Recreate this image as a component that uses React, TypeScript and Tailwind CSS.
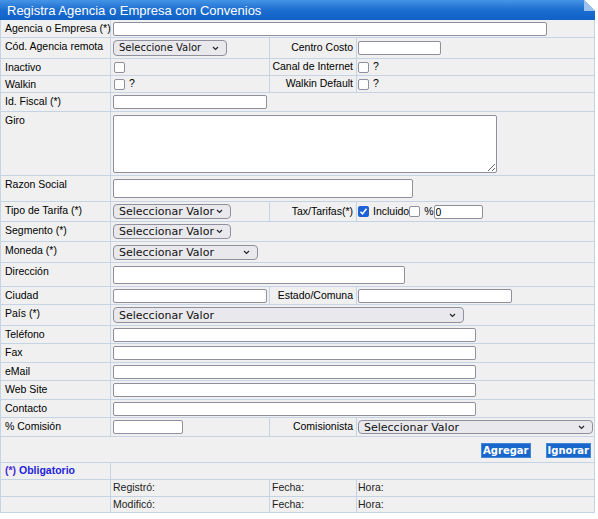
import React from "react"

const B = "border-[#c4d4e4]"

const Input = ({ className = "", value = "" }: { className?: string; value?: string }) => (
  <input
    type="text"
    readOnly
    defaultValue={value}
    className={`shrink-0 bg-white border border-[#8f8f9d] rounded-[2px] px-[1px] text-[10.5px] leading-none outline-none ${className}`}
  />
)

const Select = ({
  text,
  className = "",
  size = "text-[11px]",
}: {
  text: string
  className?: string
  size?: string
}) => (
  <div
    className={`shrink-0 flex items-center justify-between bg-[#e9e9ed] border border-[#8f8f9d] rounded-[4px] pl-[5px] pr-[7px] font-['DejaVu_Sans',sans-serif] leading-none text-[#111] ${size} ${className}`}
  >
    <span>{text}</span>
    <svg width="7" height="5" viewBox="0 0 7 5">
      <path d="M1 1l2.5 2.5L6 1" stroke="#222" strokeWidth="1.1" fill="none" />
    </svg>
  </div>
)

const Check = ({ checked = false }: { checked?: boolean }) =>
  checked ? (
    <span className="shrink-0 w-[11px] h-[11px] rounded-[2px] bg-[#1d62d6] flex items-center justify-center">
      <svg width="9" height="9" viewBox="0 0 9 9">
        <path d="M1.5 4.8l2 2 4-5" stroke="white" strokeWidth="1.5" fill="none" />
      </svg>
    </span>
  ) : (
    <span className="shrink-0 block w-[11px] h-[11px] rounded-[2px] bg-white border border-[#8f8f9d]" />
  )

const Row = ({ h, children }: { h: string; children: React.ReactNode }) => (
  <div className={`flex border-b ${B} ${h}`}>{children}</div>
)

const Label = ({ children }: { children?: React.ReactNode }) => (
  <div className={`w-[110px] shrink-0 border-r ${B} pl-[4px] pt-[2px] leading-[13px] whitespace-nowrap`}>
    {children}
  </div>
)

const Span = ({ children }: { children?: React.ReactNode }) => (
  <div className="flex-1 flex items-center pl-[2px]">{children}</div>
)

const C2 = ({ children }: { children?: React.ReactNode }) => (
  <div className={`w-[159px] shrink-0 border-r ${B} flex items-center pl-[2px]`}>{children}</div>
)

const C3 = ({ children }: { children?: React.ReactNode }) => (
  <div className={`w-[87px] shrink-0 border-r ${B} flex items-center justify-end pr-[3px] whitespace-nowrap`}>
    {children}
  </div>
)

const C4 = ({ children }: { children?: React.ReactNode }) => (
  <div className="flex-1 flex items-center pl-[1px]">{children}</div>
)

export default function App() {
  return (
    <div className="w-[598px] h-[519px] bg-white font-['Liberation_Sans',Arial,sans-serif] text-[10.5px] text-black">
      <div className="w-[595px]">
        <div className="relative h-[20px] bg-linear-to-b from-[#4494e6] via-[#1b6dd0] to-[#1061c6] flex items-center pl-[7px]">
          <span className="text-white text-[13px] leading-none">Registra Agencia o Empresa con Convenios</span>
          <svg className="absolute top-0 right-0" width="11" height="11" viewBox="0 0 11 11">
            <polygon points="0,0 11,0 11,11" fill="#ffffff" />
            <polygon points="0,0 11,11 0,11" fill="#9cc2ee" />
          </svg>
        </div>

        <div className={`border-l border-r ${B} bg-[#f0f0f0]`}>
          <Row h="h-[18px]">
            <Label>Agencia o Empresa (*)</Label>
            <Span>
              <Input className="w-[434px] h-[14px]" />
            </Span>
          </Row>
          <Row h="h-[21px]">
            <Label>Cód. Agencia remota</Label>
            <C2>
              <Select text="Seleccione Valor" size="text-[10px]" className="w-[114px] h-[16px]" />
            </C2>
            <C3>Centro Costo</C3>
            <C4>
              <Input className="w-[83px] h-[14px]" />
            </C4>
          </Row>
          <Row h="h-[17px]">
            <Label>Inactivo</Label>
            <C2>
              <div className="pl-[1px] flex items-center">
                <Check />
              </div>
            </C2>
            <C3>Canal de Internet</C3>
            <C4>
              <Check />
              <span className="ml-[4px]">?</span>
            </C4>
          </Row>
          <Row h="h-[17px]">
            <Label>Walkin</Label>
            <C2>
              <div className="pl-[1px] flex items-center">
                <Check />
                <span className="ml-[4px]">?</span>
              </div>
            </C2>
            <C3>Walkin Default</C3>
            <C4>
              <Check />
              <span className="ml-[4px]">?</span>
            </C4>
          </Row>
          <Row h="h-[19px]">
            <Label>Id. Fiscal (*)</Label>
            <Span>
              <Input className="w-[154px] h-[14px]" />
            </Span>
          </Row>
          <Row h="h-[64px]">
            <Label>Giro</Label>
            <Span>
              <textarea
                readOnly
                className="shrink-0 w-[384px] h-[58px] bg-white border border-[#8f8f9d] rounded-[2px] resize outline-none"
              />
            </Span>
          </Row>
          <Row h="h-[26px]">
            <Label>Razon Social</Label>
            <Span>
              <Input className="w-[300px] h-[19px]" />
            </Span>
          </Row>
          <Row h="h-[20px]">
            <Label>Tipo de Tarifa (*)</Label>
            <C2>
              <Select text="Seleccionar Valor" className="w-[118px] h-[15px]" />
            </C2>
            <C3>Tax/Tarifas(*)</C3>
            <C4>
              <Check checked />
              <span className="ml-[4px]">Incluido</span>
              <Check />
              <span className="ml-[4px]">%</span>
              <Input value="0" className="w-[49px] h-[14px]" />
            </C4>
          </Row>
          <Row h="h-[20px]">
            <Label>Segmento (*)</Label>
            <Span>
              <Select text="Seleccionar Valor" className="w-[118px] h-[15px]" />
            </Span>
          </Row>
          <Row h="h-[21px]">
            <Label>Moneda (*)</Label>
            <Span>
              <Select text="Seleccionar Valor" className="w-[145px] h-[15px]" />
            </Span>
          </Row>
          <Row h="h-[24px]">
            <Label>Dirección</Label>
            <Span>
              <Input className="w-[292px] h-[18px]" />
            </Span>
          </Row>
          <Row h="h-[18px]">
            <Label>Ciudad</Label>
            <C2>
              <Input className="w-[154px] h-[14px]" />
            </C2>
            <C3>Estado/Comuna</C3>
            <C4>
              <Input className="w-[154px] h-[14px]" />
            </C4>
          </Row>
          <Row h="h-[21px]">
            <Label>País (*)</Label>
            <Span>
              <Select text="Seleccionar Valor" className="w-[351px] h-[16px]" />
            </Span>
          </Row>
          {["Teléfono", "Fax", "eMail", "Web Site", "Contacto"].map((l, i) => (
            <Row key={l} h={i % 2 === 0 ? "h-[18px]" : "h-[19px]"}>
              <Label>{l}</Label>
              <Span>
                <Input className="w-[363px] h-[14px]" />
              </Span>
            </Row>
          ))}
          <Row h="h-[19px]">
            <Label>% Comisión</Label>
            <C2>
              <Input className="w-[70px] h-[14px]" />
            </C2>
            <C3>Comisionista</C3>
            <C4>
              <Select text="Seleccionar Valor" className="w-[235px] h-[14px]" />
            </C4>
          </Row>
          <Row h="h-[26px]">
            <div className="flex-1 flex justify-end items-start gap-[15px] pt-[6px] pr-[3px]">
              {["Agregar", "Ignorar"].map((b) => (
                <button
                  key={b}
                  className="h-[15px] px-[1px] bg-[#1a67cb] border border-[#3f86d8] text-white font-bold font-['DejaVu_Sans',sans-serif] text-[10px] leading-none"
                >
                  {b}
                </button>
              ))}
            </div>
          </Row>
          <Row h="h-[17px]">
            <div className={`w-[110px] shrink-0 border-r ${B} pl-[4px] flex items-center font-bold text-[#2323dc]`}>
              <span className="text-[#4b2bd8]">(*)</span>&nbsp;Obligatorio
            </div>
            <Span />
          </Row>
          <Row h="h-[17px]">
            <Label />
            <C2>
              <span className="text-[#222]">Registró:</span>
            </C2>
            <div className={`w-[87px] shrink-0 border-r ${B} flex items-center pl-[2px] text-[#222]`}>Fecha:</div>
            <C4>
              <span className="text-[#222]">Hora:</span>
            </C4>
          </Row>
          <Row h="h-[16px]">
            <Label />
            <C2>
              <span className="text-[#222]">Modificó:</span>
            </C2>
            <div className={`w-[87px] shrink-0 border-r ${B} flex items-center pl-[2px] text-[#222]`}>Fecha:</div>
            <C4>
              <span className="text-[#222]">Hora:</span>
            </C4>
          </Row>
        </div>
      </div>
    </div>
  )
}
